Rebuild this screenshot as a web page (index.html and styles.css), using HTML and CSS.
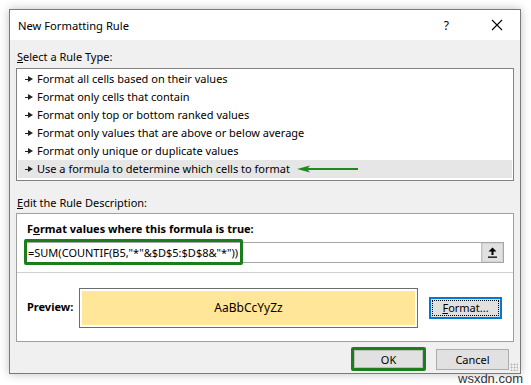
FILE: index.html
```html
<!DOCTYPE html>
<html>
<head>
    <meta http-equiv="Content-Type" content="text/html; charset=utf-8" />
    <title>New Formatting Rule</title>
    <link rel="stylesheet" href="styles.css">
</head>
<body>

<div class="dialog">
    <div class="titlebar">
        <span class="title">New Formatting Rule</span>
        <span class="help">?</span>
        <svg class="close" width="12" height="12" viewBox="0 0 12 12">
            <path d="M1 1 L11 11 M11 1 L1 11" stroke="#000" stroke-width="1.1" fill="none"/>
        </svg>
    </div>

    <div class="content">
        <div class="label"><u>S</u>elect a Rule Type:</div>
        <ul class="rules">
            <!--规则类型-->
            <li><i class="mark"></i>Format all cells based on their values</li>
            <li><i class="mark"></i>Format only cells that contain</li>
            <li><i class="mark"></i>Format only top or bottom ranked values</li>
            <li><i class="mark"></i>Format only values that are above or below average</li>
            <li><i class="mark"></i>Format only unique or duplicate values</li>
            <li class="current"><i class="mark"></i>Use a formula to determine which cells to format
                <svg class="pointer" width="62" height="8" viewBox="0 0 62 8">
                    <path d="M0 4 L13 0.5 L11 3 L61 3 L61 5 L11 5 L13 7.5 Z" fill="#1e8a1e"/>
                </svg>
            </li>
        </ul>

        <div class="label edit"><u>E</u>dit the Rule Description:</div>
        <div class="group">
            <div class="formula-part">
                <div class="bold">F<u>o</u>rmat values where this formula is true:</div>
                <div class="input">
                    <span class="formula">=SUM(COUNTIF(B5,"*"&amp;$D$5:$D$8&amp;"*"))</span>
                    <span class="upbtn">
                        <svg width="9" height="11" viewBox="0 0 9 11">
                            <path d="M4.5 0.5 L8.5 4.5 L5.5 4.5 L5.5 8 L3.5 8 L3.5 4.5 L0.5 4.5 Z" fill="#000"/>
                            <rect x="0" y="9.5" width="9" height="1.3" fill="#000"/>
                        </svg>
                    </span>
                    <div class="hilite"></div>
                </div>
            </div>
            <div class="preview-part">
                <span class="bold">Preview:</span>
                <div class="preview"><div class="sample">AaBbCcYyZz</div></div>
                <button class="btn focus"><span><u>F</u>ormat...</span></button>
            </div>
        </div>

        <div class="buttons">
            <div class="okwrap"><button class="btn">OK</button></div>
            <button class="btn">Cancel</button>
        </div>
    </div>
    <div class="grip"></div>
</div>
<div class="mark-site">wsxdn.com</div>
</body>
</html>
```

FILE: styles.css
```css
body {
    margin:0;
    background:#ffffff;
    font-family:"Noto Sans", "Open Sans", sans-serif;
    font-size:11px;
    color:#000;
    width:531px;
    height:385px;
    overflow:hidden;
    position:relative;
}
ul {
    list-style-type:none;
    margin:0;
    padding:0;
}
.dialog {
    position:relative;
    margin:9px 0 0 9px;
    width:510px;
    height:363px;
    border:1px solid #7a7a7a;
    background:#f0f0f0;
    box-shadow:0 0 9px rgba(0,0,0,0.25);
    display:flex;
    flex-direction:column;
}
.titlebar {
    height:30px;
    background:#fff;
    display:flex;
    align-items:center;
}
.title {
    flex:1;
    padding-left:8px;
    font-size:11.2px;
}
.help {
    font-size:12px;
    margin-right:42px;
}
.close {
    margin-right:17px;
}
.content {
    padding:0 6px;
    display:flex;
    flex-direction:column;
}
.label {
    height:28px;
    line-height:34px;
    padding-left:1px;
}
.label.edit {
    height:32px;
    line-height:44px;
}
.rules {
    border:1px solid #828282;
    background:#fff;
    padding:1px 1px 2px 1px;
}
.rules li {
    height:18px;
    line-height:18px;
    padding-left:7px;
    display:flex;
    align-items:center;
    white-space:nowrap;
}
.rules li.current {
    background:#e6e6e6;
}
.mark {
    display:inline-block;
    width:8px;
    height:6px;
    margin-right:4px;
    background:linear-gradient(#222,#222) 0 2.5px/4px 1.3px no-repeat;
    position:relative;
}
.mark:after {
    content:"";
    position:absolute;
    left:3px;
    top:0;
    border-left:5px solid #222;
    border-top:3px solid transparent;
    border-bottom:3px solid transparent;
}
.pointer {
    margin-left:7px;
}
.group {
    border:1px solid #a0a0a0;
    background:#fff;
    height:127px;
    display:flex;
    flex-direction:column;
}
.formula-part {
    border-bottom:1px solid #cfcfcf;
    padding:6px 9px 0 8px;
    height:59px;
    box-sizing:border-box;
}
.bold {
    font-weight:bold;
    padding-left:2px;
    height:22px;
    line-height:18px;
}
.input {
    position:relative;
    height:21px;
    border:1px solid #a6a6a6;
    box-sizing:border-box;
    display:flex;
    align-items:center;
}
.formula {
    flex:1;
    padding-left:2px;
    font-size:11px;
}
.upbtn {
    width:21px;
    height:19px;
    background:#e1e1e1;
    border-left:1px solid #c2c2c2;
    display:flex;
    align-items:center;
    justify-content:center;
    box-shadow:inset 0 0 0 1px #d3d3d3;
}
.hilite {
    position:absolute;
    left:-2px;
    top:-4px;
    width:219px;
    height:26px;
    border:3px solid #1c7d1c;
    border-radius:2px;
    box-sizing:border-box;
}
.preview-part {
    flex:1;
    display:flex;
    align-items:center;
    padding:0 11px 0 8px;
}
.preview-part .bold {
    height:auto;
    width:52px;
    padding-left:2px;
}
.preview {
    width:339px;
    height:40px;
    border:1px solid #6d6d6d;
    box-sizing:border-box;
    padding:2px;
    margin-top:1px;
}
.sample {
    height:100%;
    background:#ffe699;
    display:flex;
    align-items:center;
    justify-content:center;
    font-size:12px;
}
.btn {
    font-family:inherit;
    font-size:11px;
    background:#e1e1e1;
    border:1px solid #adadad;
    height:21px;
    width:73px;
    padding:0;
    color:#000;
}
.btn.focus {
    margin-left:auto;
    margin-top:1px;
    height:22px;
    border:2px solid #0078d7;
    padding:1px;
}
.btn.focus span {
    display:block;
    height:100%;
    line-height:14px;
    border:1px dotted #000;
    box-sizing:border-box;
}
.buttons {
    display:flex;
    justify-content:flex-end;
    align-items:center;
    gap:10px;
    padding:5px 5px 0 0;
}
.okwrap {
    border:3px solid #1c7d1c;
    border-radius:2px;
    padding:0;
}
.okwrap .btn {
    width:69px;
    height:18px;
    border-color:#bdbdbd;
}
.grip {
    position:absolute;
    right:2px;
    bottom:2px;
    width:8px;
    height:8px;
    background:radial-gradient(circle, #b5b5b5 0.8px, transparent 1.2px) 0 0/3px 3px;
}
.mark-site {
    position:absolute;
    left:458px;
    top:371px;
    font-size:13px;
    color:#333;
    font-family:"Liberation Sans", sans-serif;
}
```
